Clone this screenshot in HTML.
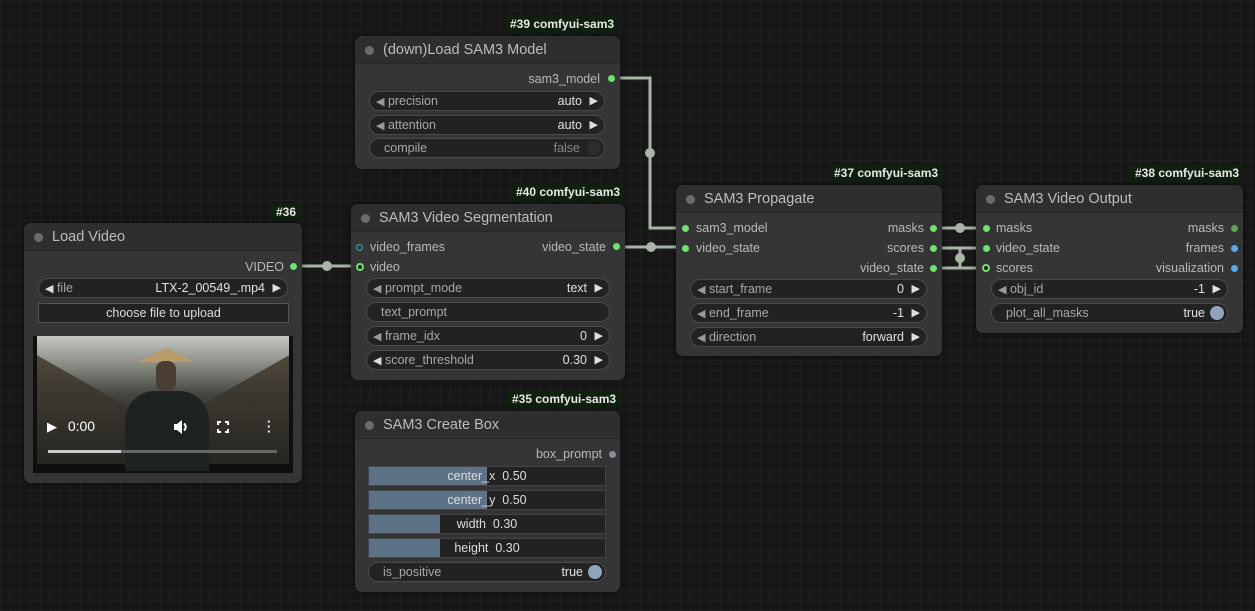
<!DOCTYPE html>
<html><head><meta charset="utf-8"><style>
*{box-sizing:border-box;margin:0;padding:0}
body{width:1255px;height:611px;overflow:hidden;position:relative;font-family:"Liberation Sans",sans-serif;
background-color:#171717;
background-image:linear-gradient(#1f1f1f 1px,transparent 1px),linear-gradient(90deg,#1f1f1f 1px,transparent 1px);
background-size:10px 10px;}
.node{position:absolute;background:#353535;border-radius:7px;box-shadow:0 0 6px rgba(0,0,0,.6)}
.title{height:28px;background:#2e2e2e;border-radius:7px 7px 0 0;border-bottom:1px solid #282828;color:#bdbdbd;font-size:14.5px;line-height:28px;padding-left:28px;position:relative}
.title:before{content:"";position:absolute;left:10px;top:10px;width:9px;height:9px;border-radius:50%;background:#6b6b6b}
.badge{position:absolute;background:#10200f;color:#e8e8e8;font-size:12px;font-weight:bold;height:17px;line-height:17px;padding:0 4px}
.abs{position:absolute}
.lab{position:absolute;font-size:12.5px;color:#b8b8b8;line-height:14px;white-space:nowrap}
.dot{position:absolute;width:7px;height:7px;border-radius:50%;background:#6ee46e}
.w{position:absolute;height:20px;border-radius:10px;background:#222;border:1px solid #4a4a4a;font-size:12.5px;color:#a8a8a8;line-height:18px;white-space:nowrap}
.w .l{position:absolute;left:6px}
.w .v{position:absolute;right:22px;color:#e0e0e0}
.w .ar{position:absolute;right:6px;color:#e0e0e0;font-size:11px}
.w .al{color:#9a9a9a;font-size:11px}
.sl{position:absolute;height:20px;background:#222;border:1px solid #444;font-size:12.5px;color:#ddd;line-height:18px;text-align:center;overflow:hidden}
.sl .f{position:absolute;left:0;top:0;bottom:0;background:#5d7187}
.sl span{position:relative}
</style></head><body>

<svg class="abs" style="left:0;top:0" width="1255" height="611">
<g stroke="#a9b5a7" stroke-width="3" fill="none">
<path d="M612 78 H650 V228 H685"/>
<path d="M616 247 H685"/>
<path d="M294 266 H360"/>
<path d="M933 228 H986"/>
<path d="M933 248 H960 V268 H986"/>
<path d="M933 268 H960 V248 H986"/>
</g>
<g fill="#a9b5a7"><circle cx="650" cy="153" r="5"/><circle cx="651" cy="247" r="5"/><circle cx="327" cy="266" r="5"/><circle cx="960" cy="228" r="5"/><circle cx="960" cy="258" r="5"/></g>
</svg>

<!-- Load Video -->
<div class="badge" style="left:272px;top:204px">#36</div>
<div class="node" style="left:24px;top:223px;width:278px;height:260px">
<div class="title">Load Video</div>
<div class="lab" style="right:18px;top:37px">VIDEO</div>
<div class="dot" style="left:266px;top:40px"></div>
<div class="w" style="left:14px;top:55px;width:250px"><span class="l"><span style="color:#ddd;font-size:11px">◀</span> file</span><span class="v">LTX-2_00549_.mp4</span><span class="ar">▶</span></div>
<div class="abs" style="left:14px;top:80px;width:251px;height:20px;background:#222;border:1px solid #555;color:#ddd;font-size:12.5px;text-align:center;line-height:18px">choose file to upload</div>
<div class="abs" style="left:9px;top:113px;width:260px;height:137px;background:#0f0f0f;overflow:hidden">
<div class="abs" style="left:4px;top:0;width:252px;height:128px;background:linear-gradient(180deg,#c5c8c2 0%,#8a8d85 22%,#454640 45%,#2a2b27 70%,#1a1a18 100%)"></div>
<div class="abs" style="left:4px;top:0;width:90px;height:128px;background:linear-gradient(180deg,#5d533f 0%,#3d3a31 40%,#262520 100%);clip-path:polygon(0 15%,100% 55%,100% 100%,0 100%)"></div>
<div class="abs" style="left:166px;top:0;width:90px;height:128px;background:linear-gradient(180deg,#5d533f 0%,#3d3a31 40%,#262520 100%);clip-path:polygon(0 55%,100% 15%,100% 100%,0 100%)"></div>
<div class="abs" style="left:104px;top:12px;width:58px;height:14px;background:#b89c6c;clip-path:polygon(50% 0,100% 100%,0 100%)"></div>
<div class="abs" style="left:92px;top:55px;width:84px;height:80px;background:#1e2322;border-radius:30px 30px 0 0"></div>
<div class="abs" style="left:123px;top:25px;width:20px;height:30px;background:#4a3e33;border-radius:8px"></div>
<div class="abs" style="left:14px;top:82px;color:#fff;font-size:13px">▶&nbsp;&nbsp;&nbsp;<span style="font-size:14px">0:00</span></div>
<svg class="abs" style="left:140px;top:84px" width="16" height="14" viewBox="0 0 16 14"><path d="M1 4h3l5-4v14l-5-4H1z" fill="#fff"/><path d="M11 3.5a4.5 4.5 0 0 1 0 7" stroke="#fff" stroke-width="2" fill="none"/></svg>
<svg class="abs" style="left:184px;top:85px" width="12" height="12" viewBox="0 0 12 12"><path d="M1 4V1h3M8 1h3v3M11 8v3H8M4 11H1V8" stroke="#fff" stroke-width="2" fill="none"/></svg>
<div class="abs" style="left:234px;top:83px;color:#fff;font-size:13px;font-weight:bold;line-height:5px">·<br>·<br>·</div>
<div class="abs" style="left:15px;top:114px;width:229px;height:3px;background:#666"></div>
<div class="abs" style="left:15px;top:114px;width:73px;height:3px;background:#ccc"></div>
</div>
</div>

<!-- Load SAM3 Model -->
<div class="badge" style="left:506px;top:16px">#39 comfyui-sam3</div>
<div class="node" style="left:355px;top:36px;width:265px;height:133px">
<div class="title">(down)Load SAM3 Model</div>
<div class="lab" style="right:20px;top:36px">sam3_model</div>
<div class="dot" style="left:253px;top:39px"></div>
<div class="w" style="left:14px;top:55px;width:236px"><span class="l"><span class="al">◀</span> precision</span><span class="v">auto</span><span class="ar">▶</span></div>
<div class="w" style="left:14px;top:79px;width:236px"><span class="l"><span class="al">◀</span> attention</span><span class="v">auto</span><span class="ar">▶</span></div>
<div class="w" style="left:14px;top:102px;width:236px"><span class="l" style="left:14px">compile</span><span class="v" style="color:#888;right:24px">false</span><span class="abs" style="right:3px;top:2px;width:14px;height:14px;border-radius:50%;background:#2c2c2c"></span></div>
</div>

<!-- Video Segmentation -->
<div class="badge" style="left:512px;top:184px">#40 comfyui-sam3</div>
<div class="node" style="left:351px;top:204px;width:274px;height:176px">
<div class="title">SAM3 Video Segmentation</div>
<div class="abs" style="left:5px;top:40px;width:7px;height:7px;border-radius:50%;border:1px solid #3aa;background:#244"></div>
<div class="lab" style="left:19px;top:36px">video_frames</div>
<div class="abs" style="left:5px;top:59px;width:8px;height:8px;border-radius:50%;border:2px solid #6ee46e;background:#222"></div>
<div class="lab" style="left:19px;top:56px">video</div>
<div class="lab" style="right:19px;top:36px">video_state</div>
<div class="dot" style="left:262px;top:39px"></div>
<div class="w" style="left:15px;top:74px;width:244px"><span class="l"><span class="al">◀</span> prompt_mode</span><span class="v">text</span><span class="ar">▶</span></div>
<div class="w" style="left:15px;top:98px;width:244px"><span class="l" style="left:14px">text_prompt</span></div>
<div class="w" style="left:15px;top:122px;width:244px"><span class="l"><span class="al">◀</span> frame_idx</span><span class="v">0</span><span class="ar">▶</span></div>
<div class="w" style="left:15px;top:146px;width:244px"><span class="l"><span style="color:#ddd;font-size:11px">◀</span> score_threshold</span><span class="v">0.30</span><span class="ar">▶</span></div>
</div>

<!-- Create Box -->
<div class="badge" style="left:508px;top:391px">#35 comfyui-sam3</div>
<div class="node" style="left:355px;top:411px;width:265px;height:181px">
<div class="title">SAM3 Create Box</div>
<div class="lab" style="right:18px;top:36px">box_prompt</div>
<div class="abs" style="left:254px;top:40px;width:7px;height:7px;border-radius:50%;background:#8a8aa0"></div>
<div class="sl" style="left:13px;top:55px;width:238px"><div class="f" style="width:118px"></div><span>center_x&nbsp; 0.50</span></div>
<div class="sl" style="left:13px;top:79px;width:238px"><div class="f" style="width:118px"></div><span>center_y&nbsp; 0.50</span></div>
<div class="sl" style="left:13px;top:103px;width:238px"><div class="f" style="width:71px"></div><span>width&nbsp; 0.30</span></div>
<div class="sl" style="left:13px;top:127px;width:238px"><div class="f" style="width:71px"></div><span>height&nbsp; 0.30</span></div>
<div class="w" style="left:13px;top:151px;width:238px"><span class="l" style="left:14px">is_positive</span><span class="v" style="right:22px">true</span><span class="abs" style="right:3px;top:2px;width:14px;height:14px;border-radius:50%;background:#8fa4bb"></span></div>
</div>

<!-- Propagate -->
<div class="badge" style="left:830px;top:165px">#37 comfyui-sam3</div>
<div class="node" style="left:676px;top:185px;width:266px;height:171px">
<div class="title">SAM3 Propagate</div>
<div class="dot" style="left:6px;top:40px"></div><div class="lab" style="left:20px;top:36px">sam3_model</div>
<div class="dot" style="left:6px;top:60px"></div><div class="lab" style="left:20px;top:56px">video_state</div>
<div class="lab" style="right:18px;top:36px">masks</div><div class="dot" style="left:254px;top:40px"></div>
<div class="lab" style="right:18px;top:56px">scores</div><div class="dot" style="left:254px;top:60px"></div>
<div class="lab" style="right:18px;top:76px">video_state</div><div class="dot" style="left:254px;top:80px"></div>
<div class="w" style="left:14px;top:94px;width:237px"><span class="l"><span class="al">◀</span> start_frame</span><span class="v">0</span><span class="ar">▶</span></div>
<div class="w" style="left:14px;top:118px;width:237px"><span class="l"><span class="al">◀</span> end_frame</span><span class="v">-1</span><span class="ar">▶</span></div>
<div class="w" style="left:14px;top:142px;width:237px"><span class="l"><span class="al">◀</span> direction</span><span class="v">forward</span><span class="ar">▶</span></div>
</div>

<!-- Video Output -->
<div class="badge" style="left:1131px;top:165px">#38 comfyui-sam3</div>
<div class="node" style="left:976px;top:185px;width:267px;height:148px">
<div class="title">SAM3 Video Output</div>
<div class="dot" style="left:7px;top:40px"></div><div class="lab" style="left:20px;top:36px">masks</div>
<div class="dot" style="left:7px;top:60px"></div><div class="lab" style="left:20px;top:56px">video_state</div>
<div class="abs" style="left:6px;top:79px;width:8px;height:8px;border-radius:50%;border:2px solid #6ee46e;background:#222"></div><div class="lab" style="left:20px;top:76px">scores</div>
<div class="lab" style="right:19px;top:36px">masks</div><div class="dot" style="left:255px;top:40px;background:#5aa55a"></div>
<div class="lab" style="right:19px;top:56px">frames</div><div class="dot" style="left:255px;top:60px;background:#5aa8e8"></div>
<div class="lab" style="right:19px;top:76px">visualization</div><div class="dot" style="left:255px;top:80px;background:#5aa8e8"></div>
<div class="w" style="left:15px;top:94px;width:237px"><span class="l"><span class="al">◀</span> obj_id</span><span class="v">-1</span><span class="ar">▶</span></div>
<div class="w" style="left:15px;top:118px;width:237px"><span class="l" style="left:14px">plot_all_masks</span><span class="v">true</span><span class="abs" style="right:3px;top:2px;width:14px;height:14px;border-radius:50%;background:#8fa4bb"></span></div>
</div>
</body></html>
